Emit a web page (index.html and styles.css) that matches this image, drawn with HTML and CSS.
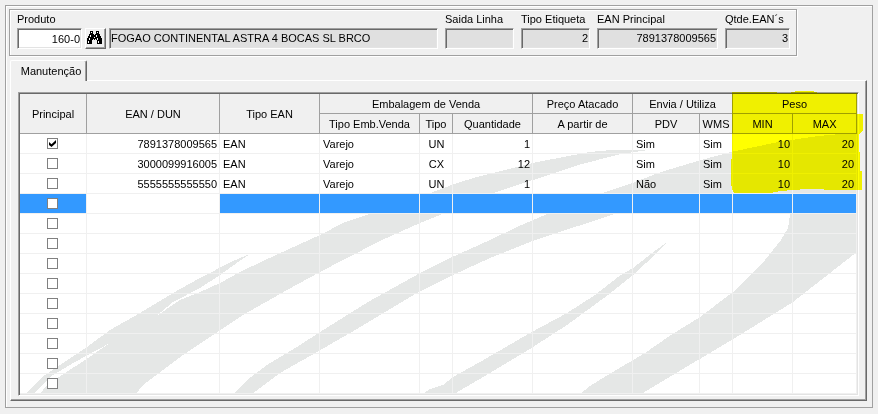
FILE: index.html
```
<!DOCTYPE html>
<html lang="pt-BR">

<head>
  <meta charset="UTF-8" />
  <meta name="viewport" content="width=device-width, initial-scale=1.0" />
  <title>Manutenção de EAN</title>
  <link rel="stylesheet" href="styles.css">
</head>

<body>
  <main class="frame">
    <form class="product-bar">
      <div class="field field-code">
        <label for="produto">Produto</label>
        <input class="box number" type="text" id="produto" value="160-0" />
      </div>
      <button class="search-button" type="button" aria-label="Pesquisar produto">
        <svg width="15" height="13" viewBox="0 0 15 13" shape-rendering="crispEdges" aria-hidden="true">
          <path d="M3 0h3v3h1v1h1V3h1V0h3v3h1v2h1v2h1v6h-5V9H9V8H8v1H7V8H6v1H5v4H0V7h1V5h1V3h1z" />
          <path fill="#fff" d="M4 1h1v1H4zM10 1h1v1h-1zM3 4h1v2H3zM9 4h1v2H9zM7 6h1v1H7zM2 7h1v2H2zM10 7h1v2h-1zM1 10h1v2H1zM11 10h1v2h-1z" />
        </svg>
      </button>
      <div class="field field-name">
        <input class="box" type="text" value="FOGAO CONTINENTAL ASTRA 4 BOCAS SL BRCO" aria-label="Descrição do produto" readonly />
      </div>
      <div class="field field-small">
        <label for="saida">Saida Linha</label>
        <input class="box" type="text" id="saida" value="" readonly />
      </div>
      <div class="field field-small">
        <label for="etiqueta">Tipo Etiqueta</label>
        <input class="box number" type="text" id="etiqueta" value="2" readonly />
      </div>
      <div class="field field-ean">
        <label for="ean">EAN Principal</label>
        <input class="box number" type="text" id="ean" value="7891378009565" readonly />
      </div>
      <div class="field field-count">
        <label for="qtde">Qtde.EAN´s</label>
        <input class="box number" type="text" id="qtde" value="3" readonly />
      </div>
    </form>

    <button class="tab" type="button">Manutenção</button>

    <section class="tab-page">
      <div class="grid">
        <svg class="watermark" viewBox="20 94 837 300" preserveAspectRatio="none" shape-rendering="crispEdges" aria-hidden="true">
          <path d="M25 394L45 375L60 365L87 347L110 330L140 313L173 293L200 278L233 261L250 254L238 262L220 275L200 288L173 302L155 317L180 300L200 292L220 283L240 272L263 261L300 244L320 235L343 223L372 213L433 192L457 183L477 177L497 172L537 162L590 152L611 150L648 150L621 154L578 165L533 180L493 193L440 215L420 223L382 240L343 260L320 272L287 290L243 315L213 335L183 355L143 385L136 394H40L47 385L65 373L85 360L110 343L75 362L50 377L33 394z" />
          <path d="M234 394L247 380L267 365L300 345L320 332L368 302L420 273L450 258L490 240L517 227L547 214L605 192L635 182L661 172L701 160L731 152L778 142L818 136L841 134H857V252L830 273L793 302L735 338L698 360L641 394H580L590 386L611 373L645 353L671 335L700 317L733 292L761 265L781 240L788 228L791 208H635L615 214L578 226L535 240L490 258L453 275L417 293L350 333L317 352L280 373L252 394z" />
          <path d="M423 394L430 389L443 385L453 377L480 362L530 333L567 313L595 295L618 277L633 268L656 250L666 243L658 252L633 275L608 295L578 317L567 325L533 347L490 373L454 394z" />
        </svg>
        <table>
          <colgroup>
            <col class="col-main">
            <col class="col-code">
            <col class="col-wide">
            <col class="col-wide">
            <col class="col-narrow">
            <col class="col-qty">
            <col class="col-wide">
            <col class="col-main">
            <col class="col-narrow">
            <col class="col-min">
            <col class="col-max">
          </colgroup>
          <thead>
            <tr>
              <th rowspan="2">Principal</th>
              <th rowspan="2">EAN / DUN</th>
              <th rowspan="2">Tipo EAN</th>
              <th colspan="3">Embalagem de Venda</th>
              <th>Preço Atacado</th>
              <th colspan="2">Envia / Utiliza</th>
              <th colspan="2">Peso</th>
            </tr>
            <tr>
              <th>Tipo Emb.Venda</th>
              <th>Tipo</th>
              <th>Quantidade</th>
              <th>A partir de</th>
              <th>PDV</th>
              <th>WMS</th>
              <th>MIN</th>
              <th>MAX</th>
            </tr>
          </thead>
          <tbody>
            <tr>
              <td class="check"><input type="checkbox" aria-label="Principal" checked /></td>
              <td class="number">7891378009565</td>
              <td>EAN</td>
              <td>Varejo</td>
              <td class="center">UN</td>
              <td class="number">1</td>
              <td></td>
              <td>Sim</td>
              <td>Sim</td>
              <td class="number">10</td>
              <td class="number">20</td>
            </tr>
            <tr>
              <td class="check"><input type="checkbox" aria-label="Principal" /></td>
              <td class="number">3000099916005</td>
              <td>EAN</td>
              <td>Varejo</td>
              <td class="center">CX</td>
              <td class="number">12</td>
              <td></td>
              <td>Sim</td>
              <td>Sim</td>
              <td class="number">10</td>
              <td class="number">20</td>
            </tr>
            <tr>
              <td class="check"><input type="checkbox" aria-label="Principal" /></td>
              <td class="number">5555555555550</td>
              <td>EAN</td>
              <td>Varejo</td>
              <td class="center">UN</td>
              <td class="number">1</td>
              <td></td>
              <td>Não</td>
              <td>Sim</td>
              <td class="number">10</td>
              <td class="number">20</td>
            </tr>
            <tr class="selected">
              <td class="check"><input type="checkbox" aria-label="Principal" /></td>
              <td class="editing"></td>
              <td></td><td></td><td></td><td></td><td></td><td></td><td></td><td></td><td></td>
            </tr>
            <tr>
              <td class="check"><input type="checkbox" aria-label="Principal" /></td>
              <td></td><td></td><td></td><td></td><td></td><td></td><td></td><td></td><td></td><td></td>
            </tr>
            <tr>
              <td class="check"><input type="checkbox" aria-label="Principal" /></td>
              <td></td><td></td><td></td><td></td><td></td><td></td><td></td><td></td><td></td><td></td>
            </tr>
            <tr>
              <td class="check"><input type="checkbox" aria-label="Principal" /></td>
              <td></td><td></td><td></td><td></td><td></td><td></td><td></td><td></td><td></td><td></td>
            </tr>
            <tr>
              <td class="check"><input type="checkbox" aria-label="Principal" /></td>
              <td></td><td></td><td></td><td></td><td></td><td></td><td></td><td></td><td></td><td></td>
            </tr>
            <tr>
              <td class="check"><input type="checkbox" aria-label="Principal" /></td>
              <td></td><td></td><td></td><td></td><td></td><td></td><td></td><td></td><td></td><td></td>
            </tr>
            <tr>
              <td class="check"><input type="checkbox" aria-label="Principal" /></td>
              <td></td><td></td><td></td><td></td><td></td><td></td><td></td><td></td><td></td><td></td>
            </tr>
            <tr>
              <td class="check"><input type="checkbox" aria-label="Principal" /></td>
              <td></td><td></td><td></td><td></td><td></td><td></td><td></td><td></td><td></td><td></td>
            </tr>
            <tr>
              <td class="check"><input type="checkbox" aria-label="Principal" /></td>
              <td></td><td></td><td></td><td></td><td></td><td></td><td></td><td></td><td></td><td></td>
            </tr>
            <tr>
              <td class="check"><input type="checkbox" aria-label="Principal" /></td>
              <td></td><td></td><td></td><td></td><td></td><td></td><td></td><td></td><td></td><td></td>
            </tr>
          </tbody>
        </table>
        <!-- yellow marker over the Peso columns -->
        <svg class="marker" width="132" height="104" viewBox="0 0 132 104" shape-rendering="crispEdges" aria-hidden="true">
          <path d="M1 1H46V2H60V1L68 0H80L86 1V2H126V23H132V40L128 43V60L129 62V80H131V99H93V98H78L60 99L42 101V102H3L1 98L0 92V70L1 66z" />
        </svg>
      </div>
    </section>
  </main>
</body>

</html>
```

FILE: styles.css
```
* {
  box-sizing: border-box;
}

body {
  margin: 5px;
  background-color: #f0f0f0;
  color: #000;
  font-family: "Liberation Sans", Arial, sans-serif;
  font-size: 11px;
  line-height: 14px;
}

input,
button {
  font: inherit;
  color: inherit;
  margin: 0;
}

.frame,
.product-bar {
  border: 1px solid #a0a0a0;
  box-shadow: 1px 1px 0 #fff, inset 1px 1px 0 #fff;
}

.frame {
  padding: 3px 5px 6px 3px;
}

/* product data */
.product-bar {
  display: flex;
  align-items: flex-end;
  gap: 7px;
  margin-right: 70px;
  padding: 2px 6px 6px 7px;
}

.field {
  display: flex;
  flex-direction: column;
  gap: 2px;
}

.field label {
  white-space: nowrap;
}

.field-code {
  width: 65px;
}

.field-name {
  flex: 1;
  min-width: 0;
}

.field-small {
  width: 69px;
}

.field-ean {
  width: 121px;
}

.field-count {
  width: 65px;
}

.box {
  width: 100%;
  height: 21px;
  padding: 0 1px;
  border: 1px solid;
  border-color: #a0a0a0 #fff #fff #a0a0a0;
  border-radius: 0;
  outline: none;
  background-color: #fff;
  box-shadow: inset 1px 1px 0 #696969, inset -1px -1px 0 #e3e3e3;
}

.box:read-only {
  padding-bottom: 2px;
  background-color: #e0e0e0;
}

.number {
  text-align: right;
}

.search-button {
  display: flex;
  align-items: center;
  justify-content: center;
  width: 21px;
  height: 21px;
  margin: 0 -4px;
  padding: 0 2px 2px 0;
  border: 1px solid;
  border-color: #fff #696969 #696969 #fff;
  background-color: #f0f0f0;
  box-shadow: inset -1px -1px 0 #a0a0a0;
}

/* tab */
.tab {
  display: block;
  position: relative;
  width: 77px;
  height: 21px;
  margin: 4px 0 -1px 1px;
  padding: 0 4px 0 9px;
  border: 1px solid;
  border-color: #fff #696969 transparent #fff;
  border-bottom: 0;
  border-radius: 2px 2px 0 0;
  background-color: #f0f0f0;
  box-shadow: inset -1px 0 0 #a0a0a0;
}

.tab-page {
  margin-left: 1px;
  padding: 11px 7px 4px;
  border: 1px solid;
  border-color: #fff #696969 #696969 #fff;
  box-shadow: inset -1px -1px 0 #a0a0a0;
}

/* grid */
.grid {
  position: relative;
  padding: 1px;
  border: 1px solid;
  border-color: #a0a0a0 #fff #fff #a0a0a0;
  background-color: #fff;
  box-shadow: inset 1px 1px 0 #696969, inset -1px -1px 0 #e3e3e3;
}

.watermark {
  position: absolute;
  top: 1px;
  left: 1px;
  width: calc(100% - 2px);
  height: calc(100% - 2px);
  fill: #e5e7e6;
}

.marker {
  position: absolute;
  top: -2px;
  right: -5px;
  fill: #ff0;
  mix-blend-mode: multiply;
}

table {
  position: relative;
  width: 100%;
  table-layout: fixed;
  border-collapse: separate;
  border-spacing: 0;
}

.col-main {
  width: 67px;
}

.col-code {
  width: 133px;
}

.col-wide {
  width: 100px;
}

.col-narrow {
  width: 33px;
}

.col-qty {
  width: 80px;
}

.col-min {
  width: 60px;
}

.col-max {
  width: 64px;
}

th,
td {
  height: 20px;
  padding: 0 2px 0 3px;
  border-right: 1px solid #f0f0f0;
  border-bottom: 1px solid #f0f0f0;
  white-space: nowrap;
}

th {
  padding: 0;
  border-color: #a0a0a0;
  background-color: #f0f0f0;
  font-weight: normal;
}

td.center {
  text-align: center;
}

.check {
  padding: 0 1px 0 0;
  text-align: center;
  line-height: 0;
}

.check input {
  appearance: none;
  width: 11px;
  height: 11px;
  border: 1px solid #808080;
  background-color: #fff;
  vertical-align: middle;
}

.check input:checked::before {
  content: "";
  display: block;
  width: 7px;
  height: 7px;
  margin: 1px;
  background-color: #000;
  clip-path: polygon(0 28%, 36% 62%, 100% 0, 100% 42%, 36% 100%, 0 70%);
}

.selected td {
  background-color: #39f;
  background-clip: padding-box;
}

.selected .editing {
  background-color: #fff;
}
```
